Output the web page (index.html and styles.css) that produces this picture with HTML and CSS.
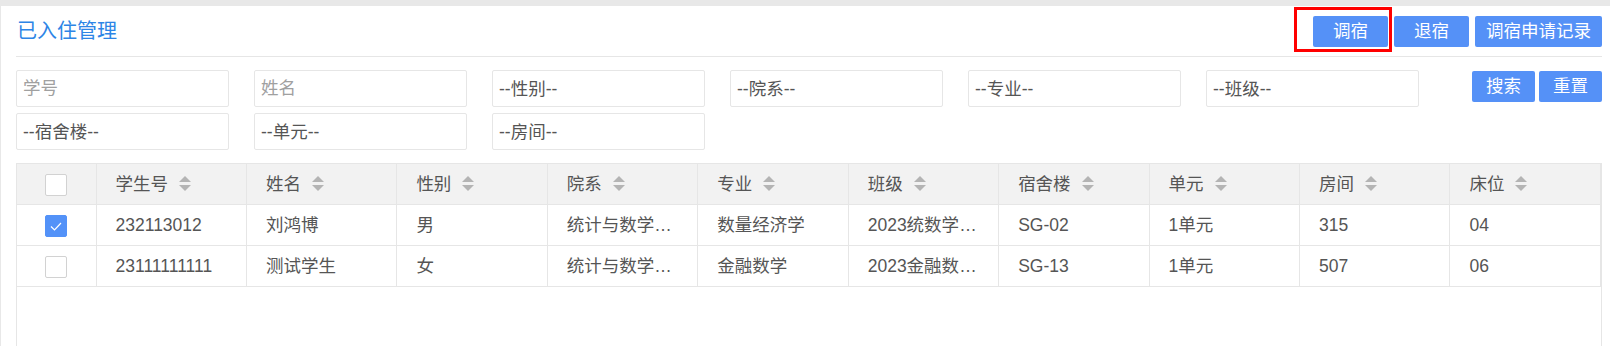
FILE: index.html
```html
<!DOCTYPE html>
<html lang="zh-CN">
<head>
    <meta charset="UTF-8">
    <title>已入住管理</title>
    <link rel="stylesheet" href="styles.css">
</head>
<body>
    <div class="panel">
        <div class="panel-header">
            <span class="panel-title">已入住管理</span>
            <div class="actions">
                <span class="mark-wrap">
                    <button type="button" class="btn btn-short">调宿</button>
                    <span class="mark"></span>
                </span>
                <button type="button" class="btn btn-short">退宿</button>
                <button type="button" class="btn btn-long">调宿申请记录</button>
            </div>
        </div>

        <form class="filters">
            <div class="filter-grid">
                <input type="text" class="field" placeholder="学号">
                <input type="text" class="field" placeholder="姓名">
                <select class="field"><option>--性别--</option></select>
                <select class="field"><option>--院系--</option></select>
                <select class="field"><option>--专业--</option></select>
                <select class="field"><option>--班级--</option></select>
                <select class="field"><option>--宿舍楼--</option></select>
                <select class="field"><option>--单元--</option></select>
                <select class="field"><option>--房间--</option></select>
            </div>
            <div class="filter-btns">
                <button type="button" class="btn btn-search">搜索</button>
                <button type="button" class="btn btn-search">重置</button>
            </div>
        </form>

        <div class="grid-wrap">
            <table class="grid">
                <colgroup>
                    <col class="col-check">
                    <col><col><col><col><col><col><col><col><col><col>
                </colgroup>
                <thead>
                    <tr>
                        <th class="cell-check"><span class="check"></span></th>
                        <th>学生号<i class="sort"></i></th>
                        <th>姓名<i class="sort"></i></th>
                        <th>性别<i class="sort"></i></th>
                        <th>院系<i class="sort"></i></th>
                        <th>专业<i class="sort"></i></th>
                        <th>班级<i class="sort"></i></th>
                        <th>宿舍楼<i class="sort"></i></th>
                        <th>单元<i class="sort"></i></th>
                        <th>房间<i class="sort"></i></th>
                        <th>床位<i class="sort"></i></th>
                    </tr>
                </thead>
                <tbody>
                    <tr>
                        <td class="cell-check">
                            <span class="check checked">
                                <svg width="12" height="9" viewBox="0 0 12 9"><polyline points="1,4.5 4.5,8 11,1" fill="none" stroke="#fff" stroke-width="1.2"/></svg>
                            </span>
                        </td>
                        <td>232113012</td>
                        <td>刘鸿博</td>
                        <td>男</td>
                        <td>统计与数学学院</td>
                        <td>数量经济学</td>
                        <td>2023统数学1班</td>
                        <td>SG-02</td>
                        <td>1单元</td>
                        <td>315</td>
                        <td>04</td>
                    </tr>
                    <tr>
                        <td class="cell-check"><span class="check"></span></td>
                        <td>23111111111</td>
                        <td>测试学生</td>
                        <td>女</td>
                        <td>统计与数学学院</td>
                        <td>金融数学</td>
                        <td>2023金融数学1班</td>
                        <td>SG-13</td>
                        <td>1单元</td>
                        <td>507</td>
                        <td>06</td>
                    </tr>
                </tbody>
            </table>
        </div>
    </div>
</body>
</html>
```

FILE: styles.css
```css
body {margin: 0; background: #e8e8e8; font-family: "Liberation Sans", "Noto Sans CJK SC", sans-serif; color: #555}
.panel {margin: 6px 0 0 1px; padding: 0 8px 0 15px; background: #fff; height: 340px; overflow: hidden}

.panel-header {height: 50px; border-bottom: 1px solid #e6e6e6; display: flex; align-items: center; justify-content: space-between}
.panel-title {font-size: 20px; color: #2d85e6; margin-left: 1px; line-height: 24px}
.actions {display: flex; gap: 6px; align-items: center; margin-top: 1px}
.mark-wrap {position: relative; display: flex}
.mark {position: absolute; left: -19px; top: -9px; width: 98px; height: 45px; box-sizing: border-box; border: 3px solid #f00; pointer-events: none}

.btn {font-family: inherit; font-size: 17.5px; line-height: 31px; height: 31px; padding: 0; border: none; border-radius: 2px; background: #5591f7; color: #fff; cursor: pointer}
.btn-short {width: 75px}
.btn-long {width: 127px}
.btn-search {width: 63px}

.filters {display: flex; justify-content: space-between; margin-top: 13px}
.filter-grid {display: grid; grid-template-columns: repeat(6, 213px); column-gap: 25px; row-gap: 6px}
.field {box-sizing: border-box; height: 37px; width: 213px; border: 1px solid #e6e6e6; border-radius: 2px; padding: 0 6px; font-family: inherit; font-size: 17.5px; color: #555; background: #fff; outline: none; appearance: none; -webkit-appearance: none}
.field::placeholder {color: #a0a0a0}
.filter-btns {display: flex; gap: 4px; margin-top: 1px; align-self: flex-start}

.grid-wrap {margin-top: 13px; border: 1px solid #e6e6e6; border-right-width: 1px; height: 300px}
.grid {width: 100%; border-collapse: collapse; table-layout: fixed; font-size: 17.5px}
.col-check {width: 79px}
.grid th, .grid td {height: 40px; padding: 0 19px; border-right: 1px solid #e6e6e6; border-bottom: 1px solid #e6e6e6; text-align: left; font-weight: normal; white-space: nowrap; overflow: hidden; text-overflow: ellipsis; line-height: 24px}
.grid th {background: #f2f2f2}
.grid .cell-check {padding: 0; text-align: center}

.sort {display: inline-block; vertical-align: middle; margin: -3px 0 0 11px; width: 12px; height: 15px; position: relative}
.sort::before, .sort::after {content: ""; position: absolute; left: 0; border-left: 6px solid transparent; border-right: 6px solid transparent}
.sort::before {top: 0; border-bottom: 6px solid #b4b4b4}
.sort::after {bottom: 0; border-top: 6px solid #b4b4b4}

.check {display: inline-flex; align-items: center; justify-content: center; box-sizing: border-box; width: 22px; height: 22px; border: 1px solid #d2d2d2; border-radius: 2px; background: #fff; vertical-align: middle}
.check.checked {background: #5392f8; border-color: #5392f8}
```
